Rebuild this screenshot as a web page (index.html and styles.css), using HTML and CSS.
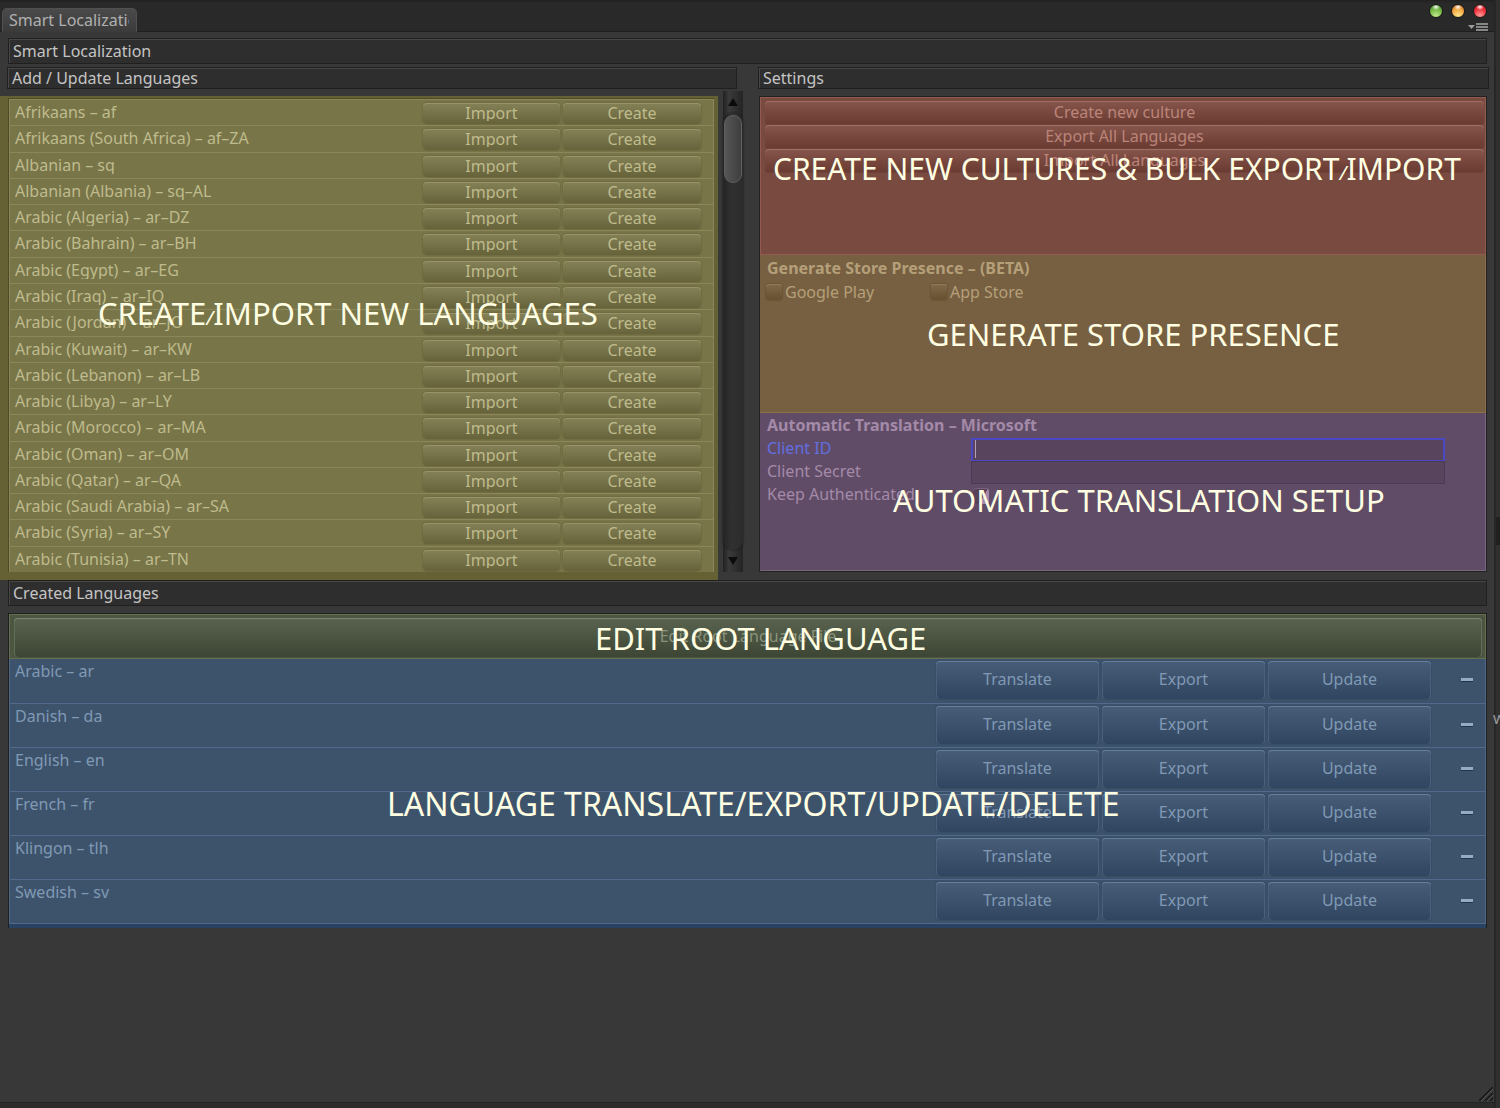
FILE: index.html
```html
<!DOCTYPE html>
<html lang="en">
<head>
<meta charset="utf-8">
<title>Smart Localization</title>
<link rel="stylesheet" href="styles.css">
</head>
<body>
<div class="desktop">
<div class="window">
  <header class="titlebar">
    <div class="tab"><span>Smart Localization</span></div>
    <div class="controls">
      <div class="lights">
        <button class="light green" aria-label="Zoom"></button>
        <button class="light amber" aria-label="Minimise"></button>
        <button class="light red" aria-label="Close"></button>
      </div>
      <button class="menu" aria-label="Window menu">
        <svg width="20" height="8" viewBox="0 0 20 8"><path d="M0 2h7L3.500 6z" fill="#9a9a9a"/><path d="M8 1h12M8 4h12M8 7h12" stroke="#a6a6a6" stroke-width="1.300"/></svg>
      </button>
    </div>
  </header>

  <h1 class="bar bar-main">Smart Localization</h1>

  <div class="columns">
    <section class="add">
      <h2 class="bar bar-small">Add / Update Languages</h2>
      <div class="add-body">
        <div class="olive">
          <ul class="cultures">
            <li><span>Afrikaans – af</span><button><b>Import</b></button><button><b>Create</b></button></li>
            <li><span>Afrikaans (South Africa) – af–ZA</span><button><b>Import</b></button><button><b>Create</b></button></li>
            <li><span>Albanian – sq</span><button><b>Import</b></button><button><b>Create</b></button></li>
            <li><span>Albanian (Albania) – sq–AL</span><button><b>Import</b></button><button><b>Create</b></button></li>
            <li><span>Arabic (Algeria) – ar–DZ</span><button><b>Import</b></button><button><b>Create</b></button></li>
            <li><span>Arabic (Bahrain) – ar–BH</span><button><b>Import</b></button><button><b>Create</b></button></li>
            <li><span>Arabic (Egypt) – ar–EG</span><button><b>Import</b></button><button><b>Create</b></button></li>
            <li><span>Arabic (Iraq) – ar–IQ</span><button><b>Import</b></button><button><b>Create</b></button></li>
            <li><span>Arabic (Jordan) – ar–JO</span><button><b>Import</b></button><button><b>Create</b></button></li>
            <li><span>Arabic (Kuwait) – ar–KW</span><button><b>Import</b></button><button><b>Create</b></button></li>
            <li><span>Arabic (Lebanon) – ar–LB</span><button><b>Import</b></button><button><b>Create</b></button></li>
            <li><span>Arabic (Libya) – ar–LY</span><button><b>Import</b></button><button><b>Create</b></button></li>
            <li><span>Arabic (Morocco) – ar–MA</span><button><b>Import</b></button><button><b>Create</b></button></li>
            <li><span>Arabic (Oman) – ar–OM</span><button><b>Import</b></button><button><b>Create</b></button></li>
            <li><span>Arabic (Qatar) – ar–QA</span><button><b>Import</b></button><button><b>Create</b></button></li>
            <li><span>Arabic (Saudi Arabia) – ar–SA</span><button><b>Import</b></button><button><b>Create</b></button></li>
            <li><span>Arabic (Syria) – ar–SY</span><button><b>Import</b></button><button><b>Create</b></button></li>
            <li><span>Arabic (Tunisia) – ar–TN</span><button><b>Import</b></button><button><b>Create</b></button></li>
          </ul>
          <p class="note note-languages">CREATE<i>/</i>IMPORT NEW LANGUAGES</p>
        </div>
        <div class="scrollbar">
          <button class="arrow" aria-label="Scroll up"><svg width="10" height="8" viewBox="0 0 10 8"><path d="M5 0l5 8H0z" fill="#0c0c0c"/></svg></button>
          <div class="track"><div class="thumb"></div></div>
          <button class="arrow" aria-label="Scroll down"><svg width="10" height="8" viewBox="0 0 10 8"><path d="M0 0h10L5 8z" fill="#0c0c0c"/></svg></button>
        </div>
      </div>
    </section>

    <section class="settings">
      <h2 class="bar bar-small">Settings</h2>
      <div class="settings-body">
        <div class="bulk">
          <button>Create new culture</button>
          <button>Export All Languages</button>
          <button>Import All Languages</button>
          <p class="note note-bulk">CREATE NEW CULTURES &amp; BULK EXPORT<i>/</i>IMPORT</p>
        </div>
        <div class="store">
          <h3>Generate Store Presence – (BETA)</h3>
          <div class="checks">
            <label><input type="checkbox">Google Play</label>
            <label><input type="checkbox">App Store</label>
          </div>
          <p class="note note-store">GENERATE STORE PRESENCE</p>
        </div>
        <div class="translation">
          <h3>Automatic Translation – Microsoft</h3>
          <div class="field active"><label for="cid">Client ID</label><div class="entry"><input type="text" id="cid"><span class="caret"></span></div></div>
          <div class="field"><label for="secret">Client Secret</label><div class="entry"><input type="text" id="secret"></div></div>
          <div class="field"><label for="keep">Keep Authenticated</label><div class="entry"><input type="checkbox" id="keep" checked></div></div>
          <p class="note note-translation">AUTOMATIC TRANSLATION SETUP</p>
        </div>
      </div>
    </section>
  </div>

  <h2 class="bar bar-main">Created Languages</h2>
  <section class="created">
    <div class="root">
      <button>Edit Root Language File</button>
      <p class="note note-root">EDIT ROOT LANGUAGE</p>
    </div>
    <div class="blue">
      <ul class="languages">
        <li><span>Arabic – ar</span><button>Translate</button><button>Export</button><button>Update</button><button class="minus" aria-label="Delete Arabic"></button></li>
        <li><span>Danish – da</span><button>Translate</button><button>Export</button><button>Update</button><button class="minus" aria-label="Delete Danish"></button></li>
        <li><span>English – en</span><button>Translate</button><button>Export</button><button>Update</button><button class="minus" aria-label="Delete English"></button></li>
        <li><span>French – fr</span><button>Translate</button><button>Export</button><button>Update</button><button class="minus" aria-label="Delete French"></button></li>
        <li><span>Klingon – tlh</span><button>Translate</button><button>Export</button><button>Update</button><button class="minus" aria-label="Delete Klingon"></button></li>
        <li><span>Swedish – sv</span><button>Translate</button><button>Export</button><button>Update</button><button class="minus" aria-label="Delete Swedish"></button></li>
      </ul>
      <p class="note note-edit">LANGUAGE TRANSLATE/EXPORT/UPDATE/DELETE</p>
    </div>
  </section>
  <svg class="grip" width="14" height="14" viewBox="0 0 14 14"><path d="M0 14L14 0M6 14l8-8M11 14l3-3" stroke="#161616" stroke-width="1.500"/><path d="M2 14L14 2M8 14l6-6" stroke="#555" stroke-width="1"/></svg>
</div>
<div class="behind">
  <span class="strip"></span>
  <span class="peek">w</span>
</div>
</div>
</body>
</html>
```

FILE: styles.css
```css
* { box-sizing: border-box; }
body {
  margin: 0;
  background: #2c2c2c;
  color: #c4c4c4;
  font: 16px/20px "Noto Sans", "Open Sans", sans-serif;
}
h1, h2, h3, p, ul { margin: 0; padding: 0; font: inherit; }
li { list-style: none; }
button {
  margin: 0;
  padding: 0;
  border: 0;
  background: none;
  color: inherit;
  font: inherit;
}
b { font-weight: normal; }
.desktop { display: grid; grid-template-columns: minmax(0, 1fr) 6px; min-height: 100vh; overflow: hidden; }
.window {
  position: relative;
  margin-bottom: 5px;
  background: #383838;
  border-bottom: 1px solid #242424;
}

/* title bar */
.titlebar {
  display: flex;
  justify-content: space-between;
  align-items: flex-end;
  height: 32px;
  padding: 0 6px 0 2px;
  background: linear-gradient(#202020, #292929 3px);
  box-shadow: inset 0 -1px #1e1e1e;
}
.tab {
  width: 135px;
  height: 24px;
  padding: 1px 7px 0 6px;
  border: 1px solid #505050;
  border-bottom: 0;
  border-radius: 5px 5px 0 0;
  background: linear-gradient(#4a4a4a, #3b3b3b);
  color: #b0b0b0;
}
.tab span { display: block; overflow: hidden; white-space: nowrap; }
.controls { display: flex; flex-direction: column; align-items: flex-end; gap: 4px; }
.lights { display: flex; gap: 8px; margin-right: 1px; }
.light { width: 14px; height: 14px; border-radius: 50%; border: 1px solid #1c1c1c; }
.green { background: radial-gradient(4px 3px at 50% 2px, #fff, transparent), radial-gradient(circle at 50% 90%, #c5ea8c, #6db33f 60%, #3a7720); }
.amber { background: radial-gradient(4px 3px at 50% 2px, #fff, transparent), radial-gradient(circle at 50% 90%, #ffe78c, #f0a13c 60%, #a8551a); }
.red { background: radial-gradient(4px 3px at 50% 2px, #fff, transparent), radial-gradient(circle at 50% 90%, #ff9a9a, #ee2b33 60%, #a01018); }
.menu { height: 10px; }
.menu svg { display: block; }

/* section bars */
.bar {
  border: 1px solid #202020;
  background: #2e2e2e;
  box-shadow: inset 1px 1px #474747;
  white-space: nowrap;
}
.bar-main { height: 26px; margin: 0 7px 0 8px; padding: 2px 4px; }
h1.bar-main { margin-top: 6px; }
.bar-small { height: 22px; padding: 0 4px; }

.columns {
  display: grid;
  grid-template-columns: minmax(0, 743fr) minmax(0, 731fr);
  gap: 15px;
  margin: 3px 5px 0 0;
}
.add .bar { margin: 0 6px 0 7px; }
.add-body { display: flex; gap: 5px; margin-top: 2px; }
.olive {
  position: relative;
  flex: 1;
  min-width: 0;
  margin-top: 5px;
  padding: 3px 4px 8px 8px;
  background: #656135;
}
.cultures {
  display: grid;
  grid-auto-rows: minmax(0, 1fr);
  height: 473px;
  border-left: 1px solid #4e4b25;
  box-shadow: 0 -1px #4e4b25;
  background: #787549;
  color: #bfbb8c;
}
.cultures li {
  display: flex;
  align-items: flex-start;
  gap: 3px;
  padding: 3px 12px 0 5px;
  border: 1px solid #8b875b;
  border-bottom: 0;
}
.cultures span { flex: 1; height: 18px; line-height: 18px; overflow: hidden; white-space: nowrap; }
.cultures button {
  width: 137px;
  height: 21px;
  border-radius: 4px;
  background: linear-gradient(#858157, #66623a);
  box-shadow: inset 0 1px #98946a, 0 0 1px 1px #706c42;
}
.cultures button:last-child { width: 138px; }
.cultures b { display: block; height: 15px; line-height: 14px; overflow: hidden; }

.scrollbar {
  display: flex;
  flex-direction: column;
  width: 20px;
  margin-bottom: 8px;
  background: linear-gradient(90deg, #222, #3a3a3a 30%, #242424);
}
.arrow { display: grid; place-items: center; height: 22px; }
.track {
  flex: 1;
  padding: 2px 1px;
  border-radius: 10px;
  background: linear-gradient(90deg, #242424, #303030 40%, #2c2c2c);
  box-shadow: 0 0 2px #111;
}
.thumb {
  height: 68px;
  border: 1px solid #606060;
  border-radius: 9px;
  background: linear-gradient(90deg, #565656, #3e3e3e);
}

/* settings */
.settings-body {
  display: grid;
  grid-template-rows: repeat(3, minmax(0, 1fr));
  height: 476px;
  margin: 7px 2px 0 1px;
  border: 1px solid #222;
}
.settings-body > div { position: relative; border: 1px solid; }
.settings-body .bulk {
  display: flex;
  flex-direction: column;
  padding: 3px 1px 0 4px;
  border-color: #935b50;
  background: #784a40;
  color: #bb8479;
}
.bulk button {
  height: 24px;
  padding-bottom: 3px;
  border-radius: 4px;
  background: linear-gradient(#86554b, #693a31);
  box-shadow: inset 0 1px #a06e63, inset 0 -1px #6f4239;
}
.settings-body .store {
  padding: 2px 5px;
  border-color: #766041 #8a7148 #8a7148 #766041;
  background: #766041;
  color: #b59f79;
}
h3 { font-weight: bold; }
.store h3, .translation h3 { margin: 0 1px; }
.checks { display: grid; grid-template-columns: 165px 165px; margin-top: 4px; }
.checks label { display: flex; align-items: center; gap: 3px; }
.checks input, .field input[type="checkbox"] {
  appearance: none;
  width: 16px;
  height: 16px;
  margin: 0;
  border-radius: 3px;
  background: linear-gradient(#80694a, #66502f);
  box-shadow: inset 0 1px #937b58, 0 0 1px 1px #6c5637;
}
.settings-body .translation {
  padding: 1px 5px;
  border-color: #604c66 #7c6482 #74697a #604c66;
  background: #604c66;
  color: #a48aa9;
}
.field { display: grid; grid-template-columns: 205px minmax(0, 1fr); align-items: center; height: 23px; padding-right: 35px; }
.field label { padding: 0 0 3px 1px; }
.translation h3 { margin-bottom: 3px; }
.active label { color: #636ee0; }
.entry { position: relative; display: flex; }
.entry input[type="text"] {
  width: 100%;
  height: 23px;
  padding: 0 4px;
  border: 1px solid #4b3955;
  outline: 0;
  background: #59445d;
  color: inherit;
  font: inherit;
}
.active input[type="text"] { border: 2px solid #4a48c4; border-bottom-width: 1px; }
.caret { position: absolute; left: 4px; top: 2px; width: 1px; height: 18px; background: #b79fbb; }
.field input[type="checkbox"] { margin-left: 2px; background: #564159; box-shadow: inset 0 1px #79617e; }
.field input:checked { background: linear-gradient(120deg, #564159 60%, #a48aa9 60%); }

/* created languages */
.created { margin: 7px 7px 0 8px; border: 1px solid #1f1f1f; border-bottom: 0; }
.root {
  position: relative;
  display: grid;
  height: 45px;
  padding: 3px 3px 2px 4px;
  border: 1px solid #66704f;
  background: #4c5541;
  color: #8a947c;
}
.root button {
  height: 39px;
  padding-bottom: 4px;
  border-radius: 4px;
  background: linear-gradient(#59634f, #3d4634);
  box-shadow: inset 0 1px #7b8770, inset 1px 0 #626d56, inset -1px 0 #626d56;
}
.blue { position: relative; border-bottom: 4px solid #294261; }
.languages {
  display: grid;
  grid-auto-rows: minmax(0, 1fr);
  height: 265px;
  background: #3d536b;
  color: #8099b5;
  border: 1px solid #50698a;
  border-top: 0;
}
.languages li { display: flex; gap: 3px; padding: 2px 12px 0 5px; }
.languages li + li { border-top: 1px solid #51698a; }
.languages span { flex: 1; }
.languages button {
  width: 163px;
  height: 38px;
  padding-bottom: 2px;
  border-radius: 4px;
  background: linear-gradient(#485d77, #30455f);
  box-shadow: inset 0 1px #66809c, inset 1px 0 #4a617c, inset -1px 0 #4a617c, 0 0 1px 1px #384d66;
}
.languages .minus {
  width: 12px;
  height: 3px;
  margin: 17px 0 0 27px;
  border-radius: 0;
  background: #93abc4;
  box-shadow: 0 1px #22344a;
}

/* annotations over the panels */
.note {
  position: absolute;
  color: #fffee2;
  font-size: 31px;
  line-height: 40px;
  white-space: nowrap;
  pointer-events: none;
}
.note i { font-size: 20px; }
.note-languages { left: 98px; top: 197px; }
.note-bulk { left: 12px; top: 51px; font-size: 30px; }
.note-store { left: 166px; top: 58px; }
.note-translation { left: 132px; top: 66px; }
.note-root { left: 585px; top: 3px; }
.note-edit { left: 378px; top: 125px; font-size: 32px; }

.grip { position: absolute; right: 1px; bottom: 1px; }
.behind { position: relative; background: #303030; border-left: 2px solid #262626; }
.strip { position: absolute; left: 0; top: 517px; width: 6px; height: 28px; background: #202020; }
.peek { position: absolute; left: -3px; top: 708px; color: #999; }
```
